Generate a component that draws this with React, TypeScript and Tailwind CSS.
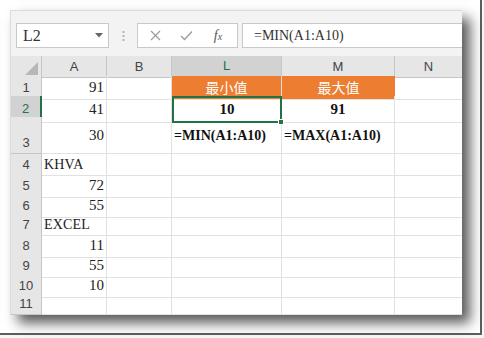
import React from "react";

const cols = "grid grid-cols-[31px_65px_65px_110px_113px_68px]";
const serif = { fontFamily: '"Liberation Serif", "Noto Sans CJK TC", serif' };
const sans = { fontFamily: '"Liberation Sans", "Noto Sans", sans-serif' };
const cjk = { fontFamily: '"Noto Sans CJK TC", "Noto Sans CJK SC", sans-serif' };

type Row = { n: number; h: string; a?: string; aText?: boolean; sel?: boolean; tall?: boolean };

const cellB = "border-r border-b border-[#e1e1e1]";

export default function App() {
  const rows: Row[] = [
    { n: 1, h: "h-[20px]", a: "91" },
    { n: 2, h: "h-[21px]", a: "41", sel: true },
    { n: 3, h: "h-[37px]", a: "30", tall: true },
    { n: 4, h: "h-[20px]", a: "KHVA", aText: true },
    { n: 5, h: "h-[20px]", a: "72" },
    { n: 6, h: "h-[20px]", a: "55" },
    { n: 7, h: "h-[20px]", a: "EXCEL", aText: true },
    { n: 8, h: "h-[20px]", a: "11" },
    { n: 9, h: "h-[20px]", a: "55" },
    { n: 10, h: "h-[20px]", a: "10" },
    { n: 11, h: "h-[20px]" },
  ];

  return (
    <div className="w-[484px] h-[338px] bg-[#f7f7f5]">
      <div className="w-[482px] h-[335px] border-r-2 border-b-2 border-[#5e5e5e] bg-white pl-[10px] pt-[10px]">
        <div className="w-[452px] h-[305px] bg-white overflow-hidden shadow-[8px_8px_12px_rgba(0,0,0,0.65)] border-t border-l border-[#dcdcdc]">
          {/* toolbar */}
          <div className="h-[45px] bg-[#f3f3f3] flex items-start pt-[12px] pl-[5px]">
            <div className="w-[93px] h-[25px] bg-white border border-[#c9c9c9] flex items-center pl-[6px] pr-[5px] justify-between">
              <span className="text-[16px] text-[#333]" style={serif}>L2</span>
              <svg width="8" height="5" viewBox="0 0 8 5"><path d="M0 0 L8 0 L4 4.5 Z" fill="#666" /></svg>
            </div>
            <div className="w-[28px] h-[25px] flex items-center justify-center">
              <svg width="3" height="12" viewBox="0 0 3 12">
                <rect x="0.5" y="1" width="2" height="2" fill="#b5b5b5" />
                <rect x="0.5" y="5" width="2" height="2" fill="#b5b5b5" />
                <rect x="0.5" y="9" width="2" height="2" fill="#b5b5b5" />
              </svg>
            </div>
            <div className="w-[101px] h-[25px] bg-white border border-[#c9c9c9] flex items-center">
              <div className="w-[32px] flex justify-center ml-[1px]">
                <svg width="11" height="11" viewBox="0 0 11 11"><path d="M1 1 L10 10 M10 1 L1 10" stroke="#9a9a9a" strokeWidth="1.2" /></svg>
              </div>
              <div className="w-[30px] flex justify-center">
                <svg width="13" height="11" viewBox="0 0 13 11"><path d="M1 6 L4.5 9.5 L12 1.5" stroke="#9a9a9a" strokeWidth="1.3" fill="none" /></svg>
              </div>
              <div className="w-[34px] flex justify-center">
                <span className="text-[14px] italic text-[#555]" style={serif}>f<span className="text-[10px]">x</span></span>
              </div>
            </div>
            <div className="ml-[4px] flex-1 h-[25px] bg-white border border-[#c9c9c9] border-r-0 flex items-center pl-[11px]">
              <span className="text-[14px] text-[#333]" style={serif}>=MIN(A1:A10)</span>
            </div>
          </div>
          {/* header row */}
          <div className={`${cols} h-[20px]`}>
            <div className="bg-[#e6e6e6] border-r border-b border-[#c6c6c6] flex items-end justify-end pr-[3px] pb-[2px]">
              <svg width="13" height="13" viewBox="0 0 13 13"><path d="M13 0 L13 13 L0 13 Z" fill="#b7b7b7" /></svg>
            </div>
            {["A", "B", "L", "M", "N"].map((c) => (
              <div
                key={c}
                className={`flex items-center justify-center text-[13px] border-r border-[#c6c6c6] ${
                  c === "L" ? "bg-[#d2d2d2] text-[#217346] border-b-2 border-b-[#217346]" : "bg-[#e6e6e6] text-[#444] border-b border-b-[#c6c6c6]"
                }`}
                style={sans}
              >
                {c}
              </div>
            ))}
          </div>
          {rows.map((r) => (
            <div key={r.n} className={`${cols} ${r.h}`}>
              <div
                className={`flex justify-center text-[13px] ${r.tall ? "items-end pb-[1px]" : "items-center"} ${
                  r.sel ? "bg-[#d2d2d2] text-[#217346] border-r-2 border-[#217346] border-b border-b-[#c6c6c6]" : "bg-[#e6e6e6] text-[#444] border-r border-b border-[#c6c6c6]"
                }`}
                style={sans}
              >
                {r.n}
              </div>
              <div
                className={`${cellB} flex items-center text-[#222] ${r.aText ? "justify-start pl-[2px] text-[14px] tracking-[0.2px]" : "justify-end pr-[2px] text-[15px]"}`}
                style={serif}
              >
                {r.a}
              </div>
              <div className={cellB} />
              {r.n === 1 ? (
                <>
                  <div className="bg-[#ed7d31] border-r border-b border-[#e1e1e1] flex items-center justify-center text-white text-[14px]" style={cjk}>最小值</div>
                  <div className="bg-[#ed7d31] border-b border-[#e1e1e1] flex items-center justify-center text-white text-[14px]" style={cjk}>最大值</div>
                </>
              ) : r.n === 2 ? (
                <>
                  <div className="relative border-2 border-[#217346] flex items-center justify-center text-[15px] font-bold text-[#111]" style={serif}>
                    10
                    <div className="absolute right-[-4px] bottom-[-4px] w-[6px] h-[6px] bg-[#217346] border border-white" />
                  </div>
                  <div className={`${cellB} flex items-center justify-center text-[15px] font-bold text-[#111]`} style={serif}>91</div>
                </>
              ) : r.n === 3 ? (
                <>
                  <div className={`${cellB} flex items-center pl-[2px] text-[14px] font-bold text-[#111] whitespace-nowrap`} style={serif}>=MIN(A1:A10)</div>
                  <div className={`${cellB} flex items-center pl-[2px] text-[14px] font-bold text-[#111] whitespace-nowrap`} style={serif}>=MAX(A1:A10)</div>
                </>
              ) : (
                <>
                  <div className={cellB} />
                  <div className={cellB} />
                </>
              )}
              <div className={cellB} />
            </div>
          ))}
        </div>
      </div>
    </div>
  );
}
